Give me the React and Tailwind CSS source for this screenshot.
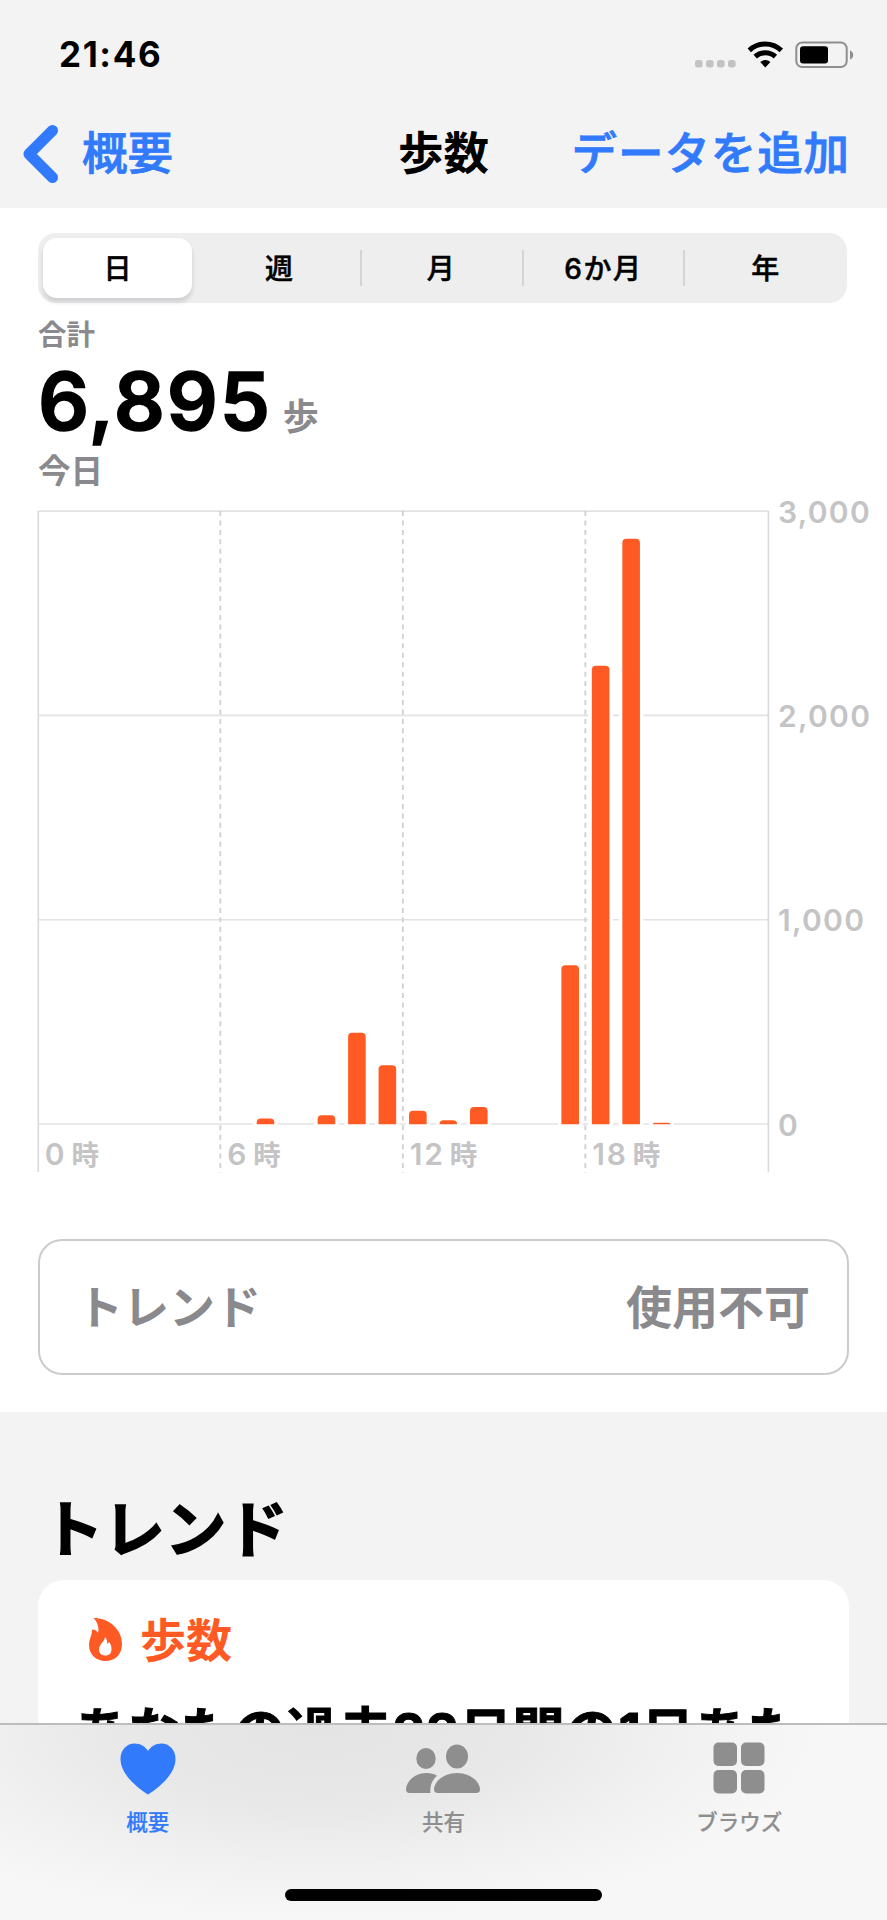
const FONT = "font-['Inter','Noto_Sans_CJK_JP',sans-serif]";

const segments = ['日', '週', '月', '6か月', '年'];

const steps = [
    { hour: 7, value: 29 },
    { hour: 9, value: 44 },
    { hour: 10, value: 448 },
    { hour: 11, value: 289 },
    { hour: 12, value: 66 },
    { hour: 13, value: 20 },
    { hour: 14, value: 85 },
    { hour: 17, value: 778 },
    { hour: 18, value: 2244 },
    { hour: 19, value: 2866 },
    { hour: 20, value: 8 },
];

// Chart geometry, in px
const LEFT = 38.3;
const TOP = 21;
const BASE = 634;
const BOTTOM = 682;
const HOUR = 30.42;
const RIGHT = LEFT + HOUR * 24;

function StatusBar() {
    return (
        <div className="flex h-[109px] items-center justify-between pl-[59px] pr-[33px]">
            <div className="text-[35px] font-bold leading-none tracking-[1.6px]">21:46</div>
            <svg className="h-[30px] w-[164px]" viewBox="0 0 164 30">
                {[0, 11, 22, 33].map((x) => (
                    <rect key={x} x={x + 5} y="20" width="7.6" height="7.4" rx="2.6" fill="#c3c3c5" />
                ))}
                <g fill="none" stroke="#000" strokeWidth="5">
                    <path d="M59.3 10.3a23.5 23.5 0 0 1 32 0" />
                    <path d="M65.2 16.7a14.8 14.8 0 0 1 20.2 0" />
                </g>
                <path d="M70.2 22a7.6 7.6 0 0 1 10.2 0L75.3 27.500z" />
                <rect x="106.3" y="2.5" width="50.4" height="24.6" rx="6" fill="none" stroke="#8e8e90" strokeWidth="2" />
                <rect x="110" y="6.2" width="28" height="17.2" rx="3" />
                <path d="M160 10.2q3.2 1.6 3.2 4.7t-3.2 4.7z" fill="#8e8e90" />
            </svg>
        </div>
    );
}

function NavBar() {
    return (
        <div className="relative flex h-[99px] items-center justify-between pb-[10px] pl-[22px] pr-[37px] text-[45.5px] leading-none">
            <div className="flex items-center gap-[23px] text-[#317afb]">
                <svg className="h-[60px] w-[37px]" viewBox="0 0 37 60" fill="none" stroke="currentColor" strokeWidth="11" strokeLinecap="round" strokeLinejoin="round">
                    <path d="M30.5 6.5 7 30l23.5 23.5" />
                </svg>
                <span className="font-medium [-webkit-text-stroke:0.8px_#317afb]">概要</span>
            </div>
            <div className="absolute inset-x-0 text-center font-bold">歩数</div>
            <div className="font-medium tracking-[0.9px] text-[#317afb] [-webkit-text-stroke:0.8px_#317afb]">データを追加</div>
        </div>
    );
}

function SegmentedControl() {
    return (
        <div className="mx-[38px] flex h-[70px] w-[809px] items-center rounded-[18px] bg-[#eeeeee] pl-[5px] text-[28px] font-medium [-webkit-text-stroke:0.5px_black]">
            {segments.map((label, i) => (
                <div key={label} className={i === 0 ? 'flex w-[157px]' : 'flex flex-1 items-center'}>
                    <div
                        className={
                            i === 0
                                ? 'flex h-[60px] w-[149px] items-center justify-center rounded-[14px] bg-white pt-[2px] shadow-[0_4px_5px_rgba(0,0,30,0.14)]'
                                : 'flex flex-1 items-center justify-center pt-[2px] tracking-[1.5px]'
                        }
                    >
                        {label}
                    </div>
                    {i > 0 && i < 4 && <div className="h-9 w-[2px] bg-[#d4d4d8]" />}
                </div>
            ))}
        </div>
    );
}

function Chart() {
    return (
        <svg className="block h-[690px] w-[887px]" viewBox="0 0 887 690">
            <g stroke="#e3e3e5" strokeWidth="1.6">
                {[0, 1, 2, 3].map((n) => (
                    <line key={n} x1={LEFT} x2={RIGHT} y1={BASE - n * 204.3} y2={BASE - n * 204.3} />
                ))}
                <line x1={LEFT} x2={LEFT} y1={TOP} y2={BOTTOM} stroke="#d9d9dd" />
                <line x1={RIGHT} x2={RIGHT} y1={TOP} y2={BOTTOM} stroke="#d9d9dd" />
            </g>
            <g stroke="#d0d0d3" strokeWidth="1.8" strokeDasharray="5 4.45">
                {[6, 12, 18].map((h) => (
                    <line key={h} x1={LEFT + h * HOUR - 0.5} x2={LEFT + h * HOUR - 0.5} y1={TOP} y2={BOTTOM + 1} />
                ))}
            </g>
            {steps.map(({ hour, value }) => {
                const h = Math.max(value * 0.2043, 1.6);
                const x = 43.4 + hour * 30.47;
                const r = Math.min(4, h);
                return (
                    <g key={hour}>
                        <rect x={x - 3.5} y={BASE - h - 2} width="24.6" height={h + 3} fill="#fff" />
                        <path
                            d={`M${x} ${BASE + 0.3}v${-(h - r)}q0 ${-r} ${r} ${-r}h${17.6 - 2 * r}q${r} 0 ${r} ${r}v${h - r}z`}
                            fill="#ff5a23"
                        />
                    </g>
                );
            })}
            <g fill="#c4c4c6" fontSize="30" fontWeight="600">
                {['0', '1,000', '2,000', '3,000'].map((t, n) => (
                    <text key={t} x="778" y={BASE - n * 204.3 + 11.5} letterSpacing="1.3">{t}</text>
                ))}
                {[0, 6, 12, 18].map((h) => (
                    <text key={h} x={LEFT + h * HOUR + 6.5} y="675" letterSpacing="1.8">
                        {h}
                        <tspan dx="5" fontSize="27.5">時</tspan>
                    </text>
                ))}
            </g>
        </svg>
    );
}

function TabBar() {
    return (
        <div className="relative h-[197px] border-t-2 border-[#bdbdbf] bg-[#f7f7f7] bg-[radial-gradient(ellipse_500px_190px_at_320px_5px,#e4e4e4_0%,#e8e8e8_40%,#f1f1f1_72%,#f7f7f7_100%)]">
            <div className="flex pt-[14px] text-[21.5px] font-medium text-[#8e8e8f] [-webkit-text-stroke:0.2px_currentColor]">
                <div className="flex flex-1 flex-col items-center gap-[7px] text-[#317afb]">
                    <svg className="h-[60px] w-[80px]" viewBox="0 0 80 60" fill="currentColor">
                        <path d="M40 55.5C36 53 12.5 38 12.5 20 12.5 10.5 19 4.5 26.5 4.5 33 4.5 37.5 8 40 12 42.5 8 47 4.5 53.5 4.5 61 4.5 67.5 10.5 67.5 20 67.5 38 44 53 40 55.5z" />
                    </svg>
                    概要
                </div>
                <div className="flex flex-1 flex-col items-center gap-[7px]">
                    <svg className="h-[60px] w-[80px]" viewBox="0 0 80 60" fill="currentColor">
                        <ellipse cx="22" cy="19.5" rx="9.7" ry="10.5" />
                        <ellipse cx="53" cy="17.5" rx="11" ry="12" />
                        <path d="M5.5 54C3 54 2 52.5 2 50.5 2 43 10.5 34 22 34 26.5 34 30.5 35 33 36.7 28 41 25.5 47 26.5 54z" />
                        <path d="M34 54C31 54 30 52.5 30 50.5 30 43 39.5 34 53 34S76 43 76 50.5C76 52.5 75 54 72 54z" />
                    </svg>
                    共有
                </div>
                <div className="flex flex-1 flex-col items-center gap-[7px]">
                    <svg className="h-[60px] w-[80px]" viewBox="0 0 80 60" fill="currentColor">
                        <rect x="14.5" y="3.5" width="23.5" height="23.5" rx="5" />
                        <rect x="42" y="3.5" width="23.5" height="23.5" rx="5" />
                        <rect x="14.5" y="31" width="23.5" height="23.5" rx="5" />
                        <rect x="42" y="31" width="23.5" height="23.5" rx="5" />
                    </svg>
                    ブラウズ
                </div>
            </div>
            <div className="absolute bottom-[19px] left-[285px] h-3 w-[317px] rounded-full bg-black" />
        </div>
    );
}

export default function App() {
    return (
        <div lang="ja" className={`${FONT} flex h-[1920px] w-[887px] flex-col overflow-hidden bg-[#f3f3f4] text-black`}>
            <header className="h-[208px] shrink-0">
                <StatusBar />
                <NavBar />
            </header>

            <section className="h-[1204px] shrink-0 bg-white pt-[25px]">
                <SegmentedControl />
                <div className="h-[187px] pl-[38px] pt-[18px] font-bold leading-none text-[#8a8a8e]">
                    <div className="text-[28.5px]">合計</div>
                    <div className="mt-[11px] flex h-[80px] items-baseline gap-[11px]">
                        <span className="text-[80px] font-semibold leading-[80px] tracking-[1.8px] text-black [-webkit-text-stroke:1.5px_black] [stroke-linejoin:round]">6,895</span>
                        <span className="text-[36px]">歩</span>
                    </div>
                    <div className="mt-[15px] text-[32.5px]">今日</div>
                </div>
                <Chart />
                <div className="mx-[38px] mt-[59px] flex h-[136px] w-[811px] items-center justify-between rounded-[24px] border-2 border-[#cbcbce] px-[37px] text-[46px] font-bold text-[#8a8a8e]">
                    <span>トレンド</span>
                    <span>使用不可</span>
                </div>
            </section>

            <section className="h-[311px] shrink-0 overflow-hidden pt-[87px]">
                <h2 className="pl-[42px] text-[61.5px] font-bold leading-[61px] [-webkit-text-stroke:1.5px_black]">トレンド</h2>
                <div className="mx-[38px] mt-[20px] h-[300px] w-[811px] rounded-[26px] bg-white pt-[38px]">
                    <div className="flex items-center gap-[17px] pl-[50px] text-[46px] font-bold leading-[45px] text-[#ff5a23]">
                        <svg className="h-[45px] w-[35px]" viewBox="0 0 35 45" fill="currentColor">
                            <path fillRule="evenodd" d="M5.5 0C19-.5 34 10 34 26 34 36.5 27 43 17.5 43S1 36.5 1 27C1 21 4 18 4 11.5 7 11.5 8.5 12.5 10 15 11.5 8.5 9 3.5 5.5 0zM17 19C16.5 24 11 26 11 31.5 11 35.5 14 37.5 17.5 37.5S23.5 35.5 23.5 31C23.5 28 22.5 25.500 21 24 20.5 25 20 25.5 19 25.5 19.5 23 18.5 20.5 17 19z" />
                        </svg>
                        歩数
                    </div>
                    <p className="mt-[40px] whitespace-nowrap pl-[37px] text-[52px] font-bold leading-[60px] tracking-[0.9px] [-webkit-text-stroke:1px_black]">あなたの過去22日間の1日あた</p>
                </div>
            </section>

            <TabBar />
        </div>
    );
}
